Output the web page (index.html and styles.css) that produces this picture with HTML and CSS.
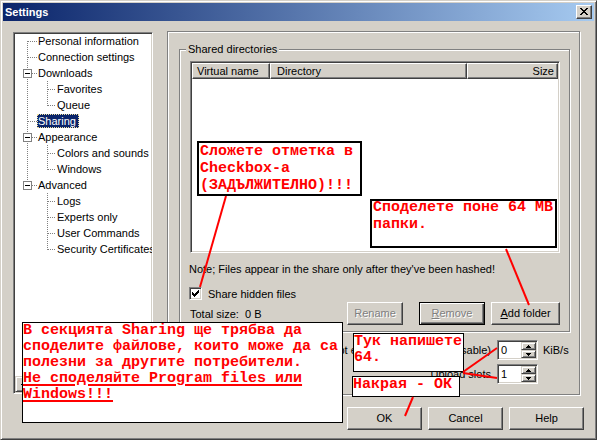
FILE: index.html
```html
<!DOCTYPE html>
<html lang="bg">
<head>
<meta charset="utf-8">
<title>Settings</title>
<link rel="stylesheet" href="styles.css">
</head>
<body>
<div class="window">
  <div class="titlebar">
    <span class="title">Settings</span>
    <span class="close"><svg width="8" height="7" viewBox="0 0 8 7" shape-rendering="crispEdges"><path fill="#000" d="M0 0h2v1H0z M6 0h2v1H6z M1 1h2v1H1z M5 1h2v1H5z M2 2h4v1H2z M3 3h2v1H3z M2 4h4v1H2z M1 5h2v1H1z M5 5h2v1H5z M0 6h2v1H0z M6 6h2v1H6z"/></svg></span>
  </div>

  <div class="main">
    <div class="tree">
      <div class="rows">
        <div class="row"><span class="g1 t-first"></span><span class="txt">Personal information</span></div>
        <div class="row"><span class="g1 t-mid"></span><span class="txt">Connection settings</span></div>
        <div class="row"><span class="g1 t-exp"><svg class="exp" width="9" height="9" viewBox="0 0 9 9" shape-rendering="crispEdges"><rect x="0.5" y="0.5" width="8" height="8" fill="#fff" stroke="#808080"/><path d="M2 4h5v1H2z" fill="#000"/></svg></span><span class="txt">Downloads</span></div>
        <div class="row"><span class="g1 t-pass"></span><span class="g2 u-mid"></span><span class="txt">Favorites</span></div>
        <div class="row"><span class="g1 t-pass"></span><span class="g2 u-last"></span><span class="txt">Queue</span></div>
        <div class="row"><span class="g1 t-mid"></span><span class="txt sel">Sharing</span></div>
        <div class="row"><span class="g1 t-exp"><svg class="exp" width="9" height="9" viewBox="0 0 9 9" shape-rendering="crispEdges"><rect x="0.5" y="0.5" width="8" height="8" fill="#fff" stroke="#808080"/><path d="M2 4h5v1H2z" fill="#000"/></svg></span><span class="txt">Appearance</span></div>
        <div class="row"><span class="g1 t-pass"></span><span class="g2 u-mid"></span><span class="txt">Colors and sounds</span></div>
        <div class="row"><span class="g1 t-pass"></span><span class="g2 u-last"></span><span class="txt">Windows</span></div>
        <div class="row"><span class="g1 t-exp-last"><svg class="exp" width="9" height="9" viewBox="0 0 9 9" shape-rendering="crispEdges"><rect x="0.5" y="0.5" width="8" height="8" fill="#fff" stroke="#808080"/><path d="M2 4h5v1H2z" fill="#000"/></svg></span><span class="txt">Advanced</span></div>
        <div class="row"><span class="g1"></span><span class="g2 u-mid"></span><span class="txt">Logs</span></div>
        <div class="row"><span class="g1"></span><span class="g2 u-mid"></span><span class="txt">Experts only</span></div>
        <div class="row"><span class="g1"></span><span class="g2 u-mid"></span><span class="txt">User Commands</span></div>
        <div class="row"><span class="g1"></span><span class="g2 u-last"></span><span class="txt">Security Certificates</span></div>
      </div>
      <div class="hscroll">
        <span class="sb-btn"><svg width="4" height="7" viewBox="0 0 4 7" shape-rendering="crispEdges"><path fill="#000" d="M0 3h1v1H0z M1 2h1v3H1z M2 1h1v5H2z M3 0h1v7H3z"/></svg></span>
        <span class="sb-track"><span class="sb-thumb"></span></span>
        <span class="sb-btn"><svg width="4" height="7" viewBox="0 0 4 7" shape-rendering="crispEdges"><path fill="#000" d="M3 3h1v1H3z M2 2h1v3H2z M1 1h1v5H1z M0 0h1v7H0z"/></svg></span>
      </div>
    </div>

    <div class="page">
      <div class="group">
        <div class="legend">Shared directories</div>
        <div class="listview">
          <div class="lv-header">
            <div class="lv-col c1">Virtual name</div>
            <div class="lv-col c2">Directory</div>
            <div class="lv-col c3">Size</div>
          </div>
        </div>
        <div class="note">Note; Files appear in the share only after they've been hashed!</div>
        <div class="check-row">
          <span class="checkbox"><svg width="7" height="7" viewBox="0 0 7 7" shape-rendering="crispEdges"><path fill="#000" d="M6 0h1v1H6z M5 1h2v1H5z M0 2h1v1H0z M4 2h3v1H4z M0 3h2v1H0z M3 3h3v1H3z M0 4h5v1H0z M1 5h3v1H1z M2 6h1v1H2z"/></svg></span>
          <span>Share hidden files</span>
        </div>
        <div class="total-row">
          <span class="total">Total size:&nbsp; 0 B</span>
          <div class="btns">
            <button class="btn dis rename">Rename</button>
            <button class="btn dis def remove"><u>R</u>emove</button>
            <button class="btn add"><u>A</u>dd folder</button>
          </div>
        </div>
      </div>

      <div class="limits">
        <span class="lbl">Automatically accept extra slot below (0 = disable)</span>
        <span class="spin"><span class="spin-val">0</span><span class="spin-btns"><span class="spin-btn"><svg width="5" height="3" viewBox="0 0 5 3" shape-rendering="crispEdges"><path fill="#000" d="M2 0h1v1H2z M1 1h3v1H1z M0 2h5v1H0z"/></svg></span><span class="spin-btn"><svg width="5" height="3" viewBox="0 0 5 3" shape-rendering="crispEdges"><path fill="#000" d="M0 0h5v1H0z M1 1h3v1H1z M2 2h1v1H2z"/></svg></span></span></span>
        <span class="unit">KiB/s</span>
        <span class="lbl">Upload slots</span>
        <span class="spin"><span class="spin-val">1</span><span class="spin-btns"><span class="spin-btn"><svg width="5" height="3" viewBox="0 0 5 3" shape-rendering="crispEdges"><path fill="#000" d="M2 0h1v1H2z M1 1h3v1H1z M0 2h5v1H0z"/></svg></span><span class="spin-btn"><svg width="5" height="3" viewBox="0 0 5 3" shape-rendering="crispEdges"><path fill="#000" d="M0 0h5v1H0z M1 1h3v1H1z M2 2h1v1H2z"/></svg></span></span></span>
        <span class="unit"></span>
      </div>
    </div>
  </div>

  <div class="footer">
    <button class="btn">OK</button>
    <button class="btn">Cancel</button>
    <button class="btn">Help</button>
  </div>
</div>

<div class="overlay">
  <div class="ann b1">Сложете отметка в<br>Checkbox-а<br>(ЗАДЪЛЖИТЕЛНО)!!!</div>
  <div class="ann b2"><div class="ann-in">Споделете поне 64 MB<br>папки.</div></div>
  <div class="ann b3">В секцията Sharing ще трябва да<br>споделите файлове, които може да са<br>полезни за другите потребители.<br><u class="ul">Не споделяйте Program files или<br>Windows!!!</u></div>
  <div class="ann b4">Тук напишете<br>64.</div>
  <div class="ann b5">Накрая - ОК</div>
  <svg class="wires" width="597" height="440" viewBox="0 0 597 440">
    <g stroke="#ff0000" stroke-width="2" fill="none">
      <line x1="226" y1="196" x2="200" y2="287"/>
      <line x1="506" y1="249" x2="529" y2="305"/>
      <line x1="497" y1="348" x2="463" y2="372"/>
      <line x1="463" y1="373" x2="497" y2="378"/>
      <line x1="413" y1="397" x2="405" y2="416"/>
    </g>
  </svg>
</div>
</body>
</html>
```

FILE: styles.css
```css
* { box-sizing: border-box; }
html, body { margin: 0; padding: 0; }
body {
  width: 597px;
  height: 440px;
  overflow: hidden;
  position: relative;
  background: #d4d0c8;
  font-family: "Liberation Sans", Arial, sans-serif;
  font-size: 11px;
  color: #000;
  --vd: repeating-linear-gradient(to bottom, #808080 0 1px, transparent 1px 2px);
  --hd: repeating-linear-gradient(to right, #808080 0 1px, transparent 1px 2px);
}
svg { display: block; }

/* window frame */
.window {
  width: 597px;
  height: 440px;
  background: #d4d0c8;
  border: 1px solid;
  border-color: #d4d0c8 #404040 #404040 #d4d0c8;
  box-shadow: inset 1px 1px #fff, inset -1px -1px #808080;
  padding: 2px;
  display: flex;
  flex-direction: column;
}
.titlebar {
  flex: none;
  height: 18px;
  display: flex;
  align-items: center;
  padding-left: 2px;
  background: linear-gradient(to right, #0a246a, #a6caf0);
}
.title { color: #fff; font-weight: bold; font-size: 11px; line-height: 13px; }
.close {
  margin-left: auto;
  margin-right: 2px;
  width: 16px;
  height: 14px;
  background: #d4d0c8;
  border: 1px solid;
  border-color: #fff #404040 #404040 #fff;
  box-shadow: inset -1px -1px #808080;
  padding: 2px 0 0 3px;
}

.main { flex: none; display: flex; margin-top: 10px; padding-left: 10px; }

/* tree */
.tree {
  flex: none;
  width: 140px;
  height: 362px;
  margin-top: 1px;
  background: #fff;
  border: 1px solid;
  border-color: #808080 #fff #fff #808080;
  box-shadow: inset 1px 1px #404040, inset -1px -1px #d4d0c8;
  padding: 1px;
  display: flex;
  flex-direction: column;
  overflow: hidden;
}
.rows { margin-top: -1px; }
.row { height: 16px; display: flex; align-items: center; white-space: nowrap; }
.g1, .g2 { flex: none; height: 16px; background-repeat: no-repeat; }
.g1 { width: 22px; display: flex; align-items: center; }
.g2 { width: 19px; }
.exp { margin-left: 8px; }
.t-first {
  background-image: var(--vd), var(--hd);
  background-size: 1px 8px, 9px 1px;
  background-position: 12px 8px, 13px 8px;
}
.t-mid {
  background-image: var(--vd), var(--hd);
  background-size: 1px 16px, 9px 1px;
  background-position: 12px 0, 13px 8px;
}
.t-pass {
  background-image: var(--vd);
  background-size: 1px 16px;
  background-position: 12px 0;
}
.t-exp {
  background-image: var(--vd), var(--hd);
  background-size: 1px 16px, 5px 1px;
  background-position: 12px 0, 17px 8px;
}
.t-exp-last {
  background-image: var(--vd), var(--hd);
  background-size: 1px 4px, 5px 1px;
  background-position: 12px 0, 17px 8px;
}
.u-mid {
  background-image: var(--vd), var(--hd);
  background-size: 1px 16px, 8px 1px;
  background-position: 10px 0, 11px 8px;
}
.u-last {
  background-image: var(--vd), var(--hd);
  background-size: 1px 9px, 8px 1px;
  background-position: 10px 0, 11px 8px;
}
.txt { height: 14px; line-height: 14px; padding: 0 3px 0 1px; }
.sel {
  background: #0a246a;
  color: #fff;
  outline: 1px dotted #f0e0a0;
  outline-offset: -1px;
}
.hscroll {
  margin-top: auto;
  flex: none;
  height: 16px;
  display: flex;
  background: #e9e7e2;
}
.sb-btn {
  flex: none;
  width: 16px;
  height: 16px;
  background: #d4d0c8;
  border: 1px solid;
  border-color: #d4d0c8 #404040 #404040 #d4d0c8;
  box-shadow: inset 1px 1px #fff, inset -1px -1px #808080;
  display: flex;
  align-items: center;
  justify-content: center;
}
.sb-track { flex: 1; display: flex; }
.sb-thumb {
  width: 80px;
  height: 16px;
  background: #d4d0c8;
  border: 1px solid;
  border-color: #d4d0c8 #404040 #404040 #d4d0c8;
  box-shadow: inset 1px 1px #fff, inset -1px -1px #808080;
}

/* property page */
.page {
  flex: none;
  width: 413px;
  height: 364px;
  margin-left: 14px;
  border: 1px solid #808080;
  box-shadow: inset 1px 1px #fff, 1px 1px 0 #fff;
  padding: 17px 0 0 11px;
}
.group {
  width: 391px;
  height: 283px;
  border: 1px solid #808080;
  box-shadow: inset 1px 1px #fff, 1px 1px 0 #fff;
  padding: 0 9px 0 10px;
}
.legend {
  width: max-content;
  margin: -7px 0 0 -4px;
  padding: 0 2px;
  background: #d4d0c8;
  line-height: 13px;
}
.listview {
  width: 370px;
  height: 192px;
  margin-top: 5px;
  background: #fff;
  border: 1px solid;
  border-color: #808080 #fff #fff #808080;
  box-shadow: inset 1px 1px #404040, inset -1px -1px #d4d0c8;
  padding: 1px;
}
.lv-header { display: flex; height: 16px; }
.lv-col {
  flex: none;
  height: 16px;
  line-height: 14px;
  background: #d4d0c8;
  border: 1px solid;
  border-color: #fff #404040 #404040 #fff;
  box-shadow: inset -1px -1px #808080;
  white-space: nowrap;
  overflow: hidden;
}
.c1 { width: 78px; padding-left: 4px; }
.c2 { width: 197px; padding-left: 6px; }
.c3 { width: 91px; text-align: right; padding-right: 3px; }
.note { margin: 10px 0 0 -1px; line-height: 13px; white-space: nowrap; }
.check-row { display: flex; align-items: center; height: 13px; margin: 11px 0 0 -1px; }
.checkbox {
  flex: none;
  width: 13px;
  height: 13px;
  background: #fff;
  border: 1px solid;
  border-color: #808080 #fff #fff #808080;
  box-shadow: inset 1px 1px #404040, inset -1px -1px #d4d0c8;
  padding: 2px 0 0 2px;
  margin-right: 6px;
}
.total-row {
  display: flex;
  align-items: center;
  justify-content: space-between;
  height: 23px;
  margin-top: 2px;
}
.btns { display: flex; }

.btn {
  appearance: none;
  -webkit-appearance: none;
  margin: 0;
  padding: 0;
  height: 23px;
  font-family: inherit;
  font-size: 11px;
  line-height: 19px;
  color: #000;
  text-align: center;
  background: #d4d0c8;
  border: 1px solid;
  border-color: #fff #404040 #404040 #fff;
  box-shadow: inset -1px -1px #808080;
}
.btn u { text-decoration-thickness: 1px; text-underline-offset: 1px; }
.btn.dis { color: #808080; text-shadow: 1px 1px 0 #fff; }
.btn.def {
  border-color: #000;
  box-shadow: inset 1px 1px #fff, inset -1px -1px #404040, inset -2px -2px #808080;
}
.rename { width: 56px; }
.remove { width: 66px; margin-left: 16px; }
.add { width: 69px; margin-left: 6px; }

.limits {
  display: grid;
  grid-template-columns: 318px 41px auto;
  grid-auto-rows: 20px;
  row-gap: 4px;
  align-items: center;
  margin-top: 8px;
}
.lbl { justify-self: end; padding-right: 6px; white-space: nowrap; }
.unit { padding-left: 5px; }
.spin {
  width: 41px;
  height: 20px;
  background: #fff;
  border: 1px solid;
  border-color: #808080 #fff #fff #808080;
  box-shadow: inset 1px 1px #404040, inset -1px -1px #d4d0c8;
  padding: 1px;
  display: flex;
}
.spin-val { flex: 1; padding-left: 2px; line-height: 16px; }
.spin-btns { flex: none; width: 15px; display: flex; flex-direction: column; }
.spin-btn {
  height: 8px;
  background: #d4d0c8;
  border: 1px solid;
  border-color: #d4d0c8 #404040 #404040 #d4d0c8;
  box-shadow: inset 1px 1px #fff, inset -1px -1px #808080;
  display: flex;
  align-items: center;
  justify-content: center;
}

.footer {
  flex: none;
  display: flex;
  justify-content: flex-end;
  gap: 6px;
  margin-top: 12px;
  padding-right: 10px;
}
.footer .btn { width: 75px; }

/* annotations drawn over the dialog */
.overlay {
  position: absolute;
  left: 0;
  top: 0;
  width: 597px;
  height: 440px;
  pointer-events: none;
}
.ann {
  position: absolute;
  background: #fff;
  border: 1px solid #000;
  color: #ff0000;
  font-family: "Liberation Mono", "Courier New", monospace;
  font-weight: bold;
  font-size: 15px;
  line-height: 16px;
  white-space: nowrap;
  overflow: hidden;
}
.b1 { left: 197px; top: 141px; width: 165px; height: 55px; border-width: 2px; line-height: 17px; padding-left: 1px; }
.b2 { left: 370px; top: 199px; width: 187px; height: 49px; border-width: 2px; line-height: 17px; padding-left: 1px; }
.ann-in { margin-top: -2px; }
.b3 { left: 22px; top: 322px; width: 321px; height: 101px; }
.b4 { left: 353px; top: 333px; width: 111px; height: 39px; }
.b5 { left: 352px; top: 376px; width: 108px; height: 21px; }
.ul { text-decoration: underline; text-decoration-thickness: 2px; text-underline-offset: 2px; }
.wires { position: absolute; left: 0; top: 0; }
```
